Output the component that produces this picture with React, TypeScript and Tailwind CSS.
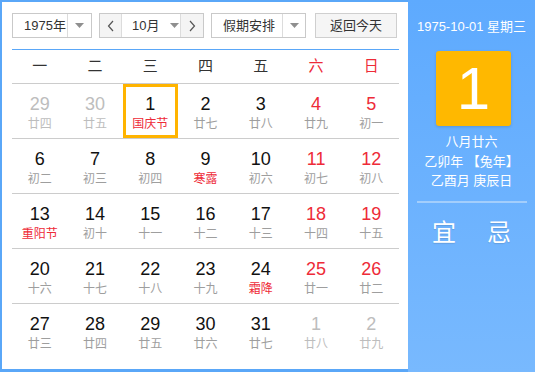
import React from "react";

type Day = { n: number; l: string; other?: boolean; fest?: boolean; sel?: boolean };

const rows: Day[][] = [
  [
    { n: 29, l: "廿四", other: true },
    { n: 30, l: "廿五", other: true },
    { n: 1, l: "国庆节", fest: true, sel: true },
    { n: 2, l: "廿七" },
    { n: 3, l: "廿八" },
    { n: 4, l: "廿九" },
    { n: 5, l: "初一" },
  ],
  [
    { n: 6, l: "初二" },
    { n: 7, l: "初三" },
    { n: 8, l: "初四" },
    { n: 9, l: "寒露", fest: true },
    { n: 10, l: "初六" },
    { n: 11, l: "初七" },
    { n: 12, l: "初八" },
  ],
  [
    { n: 13, l: "重阳节", fest: true },
    { n: 14, l: "初十" },
    { n: 15, l: "十一" },
    { n: 16, l: "十二" },
    { n: 17, l: "十三" },
    { n: 18, l: "十四" },
    { n: 19, l: "十五" },
  ],
  [
    { n: 20, l: "十六" },
    { n: 21, l: "十七" },
    { n: 22, l: "十八" },
    { n: 23, l: "十九" },
    { n: 24, l: "霜降", fest: true },
    { n: 25, l: "廿一" },
    { n: 26, l: "廿二" },
  ],
  [
    { n: 27, l: "廿三" },
    { n: 28, l: "廿四" },
    { n: 29, l: "廿五" },
    { n: 30, l: "廿六" },
    { n: 31, l: "廿七" },
    { n: 1, l: "廿八", other: true },
    { n: 2, l: "廿九", other: true },
  ],
];

const weekdays = ["一", "二", "三", "四", "五", "六", "日"];

function Caret() {
  return (
    <svg width="9" height="5" viewBox="0 0 9 5">
      <path d="M0 0 L9 0 L4.5 5 Z" fill="#8f8f8f" />
    </svg>
  );
}

function Chevron({ dir }: { dir: "l" | "r" }) {
  return (
    <svg width="7" height="12" viewBox="0 0 7 12">
      <path
        d={dir === "l" ? "M6 1 L1.5 6 L6 11" : "M1 1 L5.5 6 L1 11"}
        fill="none"
        stroke="#555"
        strokeWidth="1.2"
      />
    </svg>
  );
}

export default function App() {
  const font = { fontFamily: '"Liberation Sans", "Noto Sans CJK SC", sans-serif' };
  return (
    <div className="w-[535px] h-[372px] flex bg-white text-[#333]" style={font}>
      <div className="w-[408px] h-full border-l-2 border-t-2 border-b-[3px] border-[#5aa7f8] pl-[10px] pr-[9px] pt-[11px] flex flex-col">
        {/* controls */}
        <div className="flex h-[25px] text-[13px] text-[#333]">
          <div className="flex w-[80px] h-full border border-[#c9c9c9] bg-white">
            <div className="w-[54px] flex items-center pl-[11px]">1975年</div>
            <div className="flex-1 border-l border-[#dcdcdc] flex items-center justify-center">
              <Caret />
            </div>
          </div>
          <div className="flex w-[105px] h-full border border-[#c9c9c9] ml-[7px]">
            <div className="w-[22px] bg-[#f4f4f4] border-r border-[#dcdcdc] flex items-center justify-center">
              <Chevron dir="l" />
            </div>
            <div className="flex-1 bg-white flex items-center pl-[10px] gap-[11px]">
              <span>10月</span>
              <Caret />
            </div>
            <div className="w-[23px] bg-[#f4f4f4] border-l border-[#dcdcdc] flex items-center justify-center">
              <Chevron dir="r" />
            </div>
          </div>
          <div className="flex w-[95px] h-full border border-[#c9c9c9] ml-[7px] bg-white">
            <div className="w-[70px] flex items-center pl-[11px]">假期安排</div>
            <div className="flex-1 border-l border-[#dcdcdc] flex items-center justify-center">
              <Caret />
            </div>
          </div>
          <div className="w-[82px] h-full ml-[9px] border border-[#cfcfcf] bg-[#f5f5f5] flex items-center justify-center">
            返回今天
          </div>
        </div>
        <div className="mt-[11px] h-[1px] bg-[#5aa7f8]"></div>
        {/* weekday header */}
        <div className="grid grid-cols-7 h-[33px] text-[15px]">
          {weekdays.map((w, i) => (
            <div
              key={w}
              className={`flex items-center justify-center ${i >= 5 ? "text-[#ee2b38]" : "text-[#333]"}`}
            >
              {w}
            </div>
          ))}
        </div>
        {rows.map((r, ri) => (
          <div key={ri} className="grid grid-cols-7 h-[55px] border-t border-[#cccccc]">
            {r.map((d, ci) => {
              const weekend = ci >= 5;
              const numColor = d.other ? "text-[#bdbdbd]" : weekend ? "text-[#ee2b38]" : "text-[#111]";
              const lunColor = d.other ? "text-[#bdbdbd]" : d.fest ? "text-[#ee2b38]" : "text-[#9e9e9e]";
              return (
                <div
                  key={ci}
                  className={`flex flex-col items-center pt-[10px] ${d.sel ? "shadow-[inset_0_0_0_3px_#ffb400]" : ""}`}
                >
                  <div className={`text-[18px] leading-[20px] ${numColor}`}>{d.n}</div>
                  <div className={`text-[12px] leading-[16px] mt-[2px] ${lunColor}`}>{d.l}</div>
                </div>
              );
            })}
          </div>
        ))}
      </div>
      {/* right panel */}
      <div className="flex-1 h-full bg-gradient-to-b from-[#5eaafe] to-[#78b9fe] flex flex-col items-center text-white">
        <div className="mt-[19px] text-[13px] leading-[16px]">1975-10-01 星期三</div>
        <div className="mt-[16px] ml-[4px] w-[75px] h-[75px] rounded-[3px] bg-[#ffb800] shadow-[0_1px_3px_rgba(0,0,0,0.15)] flex items-center justify-center text-[60px] leading-none">
          1
        </div>
        <div className="mt-[6px] text-[13px] leading-[19.5px] text-center">
          <div>八月廿六</div>
          <div>乙卯年 【兔年】</div>
          <div>乙酉月 庚辰日</div>
        </div>
        <div className="mt-[10px] w-[110px] h-[2px] bg-[#a3cefc]"></div>
        <div className="mt-[16px] w-[110px] flex text-[24px] leading-[28px] [text-shadow:0_1px_1px_rgba(0,0,0,0.12)]">
          <div className="flex-1 text-center">宜</div>
          <div className="flex-1 text-center">忌</div>
        </div>
      </div>
    </div>
  );
}
